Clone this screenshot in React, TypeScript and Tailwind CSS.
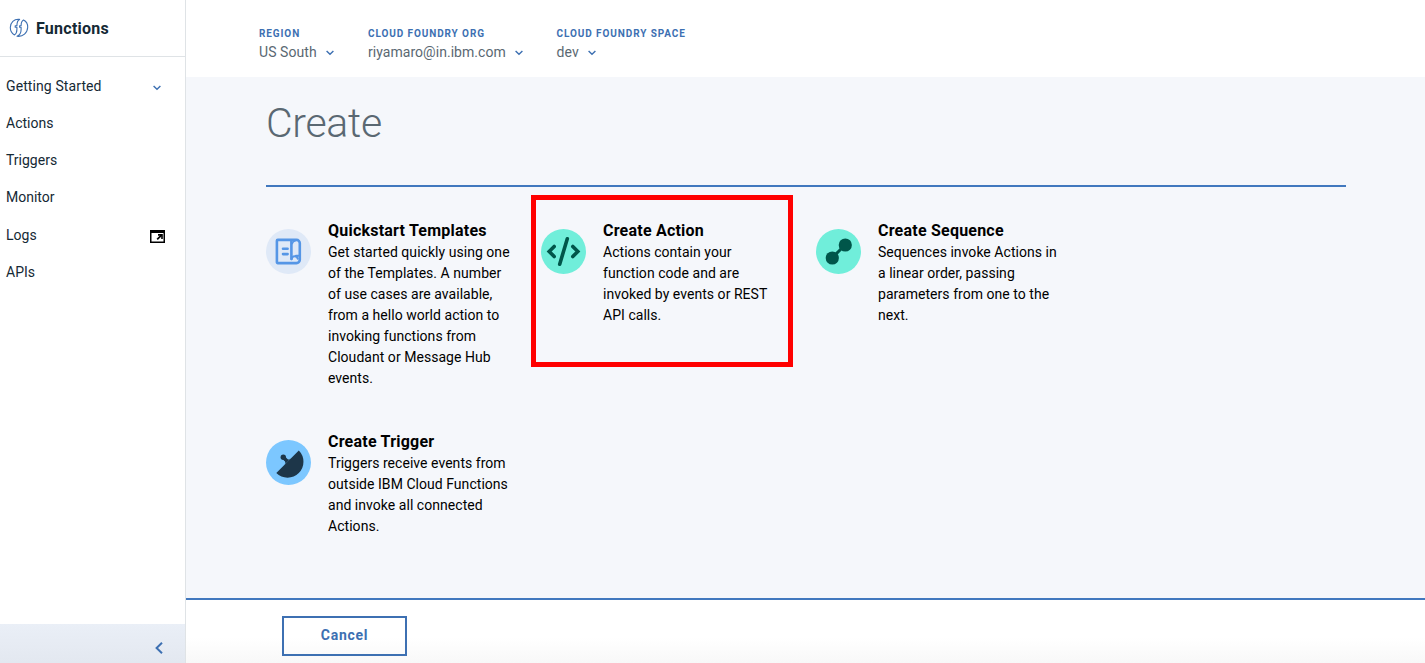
import React from "react";

function Chevron({ className = "" }: { className?: string }) {
  return (
    <svg viewBox="0 0 8 6" className={`h-[6px] w-[8px] shrink-0 ${className}`} fill="none" stroke="#3d70b2" strokeWidth="1.4">
      <path d="M0.6 0.9 4 4.3 7.4 0.9" />
    </svg>
  );
}

function FunctionsLogo() {
  return (
    <svg viewBox="0 0 20 20" className="h-5 w-5 shrink-0" fill="none" stroke="#3d70b2" strokeWidth="1.1" strokeLinejoin="round" strokeLinecap="round">
      <path d="M10.600 1.400C5 .6 1.300 4.900 1.300 9.500c0 3.200 1.500 5.900 4.200 7.400 1.900-1.200 2.400-3 2.400-5.400V9.300H6.200V7.800h1.700c0-3.400.6-5.600 2.700-6.400Z" />
      <path d="M14.500 2.100c2.800 1.400 4.300 4.200 4.200 7.200-.2 5.400-4.700 9.800-10.700 8.900 3.200-1.200 4.100-3.800 4.100-6.700V9.300h-1.500V7.800h1.500c0-3 .3-4.600 2.400-5.700Z" />
    </svg>
  );
}

function TemplateIcon() {
  return (
    <svg viewBox="0 0 45 45" className="h-[45px] w-[45px] shrink-0" fill="none" stroke="#5596e6" strokeWidth="2.6" strokeLinecap="round" strokeLinejoin="round">
      <circle cx="22.5" cy="22.5" r="22.5" fill="#dfe9f7" stroke="none" />
      <path d="M11.800 10.900h18.700a3.300 3.300 0 0 1 3.300 3.300v16.600a3.300 3.300 0 0 1-3.300 3.300H11.800a.9.9 0 0 1-.9-.9V11.800c0-.5.400-.9.900-.9Z" />
      <path d="M25.400 12v18M17 19.700h4.600M17 25.100h4.600" />
      <path d="M25.600 30.200c.3-2 1.400-3 3-3 1.700 0 2.900 1 3.200 2.600M30 26.700h3.500" strokeWidth="2" />
      <path d="M26.300 14.500c.5-1.500 1.500-2.400 3-2.700" strokeWidth="1.5" />
    </svg>
  );
}

function ActionIcon() {
  return (
    <svg viewBox="0 0 45 45" className="h-[45px] w-[45px] shrink-0" fill="none" stroke="#00564a" strokeWidth="3.6">
      <circle cx="22.5" cy="22.5" r="22.5" fill="#70eeda" stroke="none" />
      <path d="M13.200 17.500 8.200 22.500l5 5M31.800 17.500l5 5-5 5" strokeLinecap="round" />
      <path d="M26.300 9.800 18.700 35.200" strokeLinecap="round" />
    </svg>
  );
}

function SequenceIcon() {
  return (
    <svg viewBox="0 0 45 45" className="h-[45px] w-[45px] shrink-0" fill="#00564a">
      <circle cx="22.5" cy="22.5" r="22.5" fill="#70eeda" />
      <path d="M16 29 29 16" stroke="#00564a" strokeWidth="3" />
      <circle cx="16.3" cy="29" r="6.6" />
      <circle cx="29.3" cy="16" r="6.6" />
    </svg>
  );
}

function TriggerIcon() {
  return (
    <svg viewBox="0 0 45 45" className="h-[45px] w-[45px] shrink-0" fill="#1d3649">
      <circle cx="22.5" cy="22.5" r="22.5" fill="#7cc7ff" />
      <path d="M32.800 10.500A15.900 15.900 0 0 1 10.300 33Z" />
      <path d="M18.600 19.200c1.900 1 3.800.8 6-.8l-6 6.200c1.200-2 1-3.600-.9-4.600Z" />
      <path d="M17.300 17.300 21.500 21.500" stroke="#1d3649" strokeWidth="3.4" />
      <circle cx="17.3" cy="17.3" r="2.7" />
    </svg>
  );
}

function LaunchIcon() {
  return (
    <svg viewBox="0 0 15 13" className="mt-[2px] h-[13px] w-[15px] shrink-0" fill="none" stroke="#000">
      <path d="M.75 1.500v10.750h13.500V1.500" strokeWidth="1.5" />
      <path d="M0 1.500h15" strokeWidth="3" />
      <path d="M7.200 9.300 11.300 5.400" strokeWidth="1.8" />
      <path d="M8 4.900h4v4" strokeWidth="1.6" />
    </svg>
  );
}

const nav = ["Getting Started", "Actions", "Triggers", "Monitor", "Logs", "APIs"];

const filters = [
  { label: "REGION", value: "US South", box: "w-[109px]", track: "tracking-[0.06px]" },
  { label: "CLOUD FOUNDRY ORG", value: "riyamaro@in.ibm.com", box: "w-[188.6px]", track: "tracking-[0.04px]" },
  { label: "CLOUD FOUNDRY SPACE", value: "dev", box: "w-[160px]", track: "tracking-[0.1px]" },
];

const cards = [
  {
    title: "Quickstart Templates",
    icon: <TemplateIcon />,
    lines: [
      "Get started quickly using one",
      "of the Templates. A number",
      "of use cases are available,",
      "from a hello world action to",
      "invoking functions from",
      "Cloudant or Message Hub",
      "events.",
    ],
  },
  {
    title: "Create Action",
    icon: <ActionIcon />,
    lines: ["Actions contain your", "function code and are", "invoked by events or REST", "API calls."],
    highlighted: true,
  },
  {
    title: "Create Sequence",
    icon: <SequenceIcon />,
    lines: ["Sequences invoke Actions in", "a linear order, passing", "parameters from one to the", "next."],
  },
  {
    title: "Create Trigger",
    icon: <TriggerIcon />,
    lines: ["Triggers receive events from", "outside IBM Cloud Functions", "and invoke all connected", "Actions."],
  },
];

export default function App() {
  return (
    <div className="flex h-[663px] w-full overflow-hidden bg-white font-['Roboto','Liberation_Sans',sans-serif] text-[14px] text-black">
      <aside className="flex w-[186px] shrink-0 flex-col border-r border-[#dfe3e6]">
        <div className="flex h-[57px] items-center gap-[7px] border-b border-[#dfe3e6] pl-[9px] text-[#152935]">
          <FunctionsLogo />
          <h2 className="pt-px text-[16px] font-bold tracking-[0.25px]">Functions</h2>
        </div>
        <nav className="flex flex-1 flex-col pt-[11px] text-[#152935]">
          {nav.map((item) => (
            <a key={item} className="flex h-[37.13px] items-center justify-between pl-[6px] pr-[20px]">
              <span className={item === "Getting Started" ? "tracking-[0.1px]" : ""}>{item}</span>
              {item === "Getting Started" && <Chevron className="mr-[4px] mt-[2px]" />}
              {item === "Logs" && <LaunchIcon />}
            </a>
          ))}
        </nav>
        <div className="flex h-[39px] items-center justify-end bg-linear-to-b from-[#eaeff7] to-[#e3e8f0] pr-[22px] pt-[9px]">
          <svg viewBox="0 0 8 12" className="h-3 w-2" fill="none" stroke="#3d70b2" strokeWidth="2">
            <path d="M7 .8 1.600 6 7 11.200" />
          </svg>
        </div>
      </aside>
      <main className="flex min-w-0 flex-1 flex-col">
        <header className="flex h-[77px] shrink-0 pl-[73px] pt-[27px]">
          {filters.map((f) => (
            <div key={f.label} className={`${f.box} whitespace-nowrap`}>
              <div className="text-[10px] font-bold leading-[13px] tracking-[0.9px] text-[#3d70b2]">{f.label}</div>
              <div className="mt-[2px] flex items-center gap-[9px] leading-5 text-[#5a6872]">
                <span className={f.track}>{f.value}</span>
                <Chevron className="mt-[2px]" />
              </div>
            </div>
          ))}
        </header>
        <section className="flex-1 bg-[#f5f7fb] px-20">
          <h1 className="h-[108px] pt-[21px] text-[41px] font-light leading-[50px] tracking-[-0.3px] text-[#5a6872]">Create</h1>
          <div className="h-[2px] w-[1080px] bg-[#4178be]" />
          <div className="grid w-[825px] grid-cols-[repeat(3,275px)] grid-rows-[211px_auto] pt-[33px]">
            {cards.map((card) => (
              <article key={card.title} className="relative flex items-start gap-[17px]">
                <div className="mt-[9px]">{card.icon}</div>
                <div className="whitespace-nowrap leading-[21px]">
                  <h3 className="text-[16px] font-bold tracking-[0.22px]">{card.title}</h3>
                  <p className="mt-px tracking-[0.04px]">
                    {card.lines.map((line) => (
                      <span key={line} className="block">{line}</span>
                    ))}
                  </p>
                </div>
                {card.highlighted && (
                  <div className="absolute -left-[10px] -top-[25px] h-[172px] w-[262px] border-[5px] border-[#ff0000]" />
                )}
              </article>
            ))}
          </div>
        </section>
        <footer className="h-[65px] shrink-0 border-t-2 border-[#4178be] bg-linear-to-b from-white from-60% to-[#f8f8f8] pl-24 pt-4">
          <button className="flex h-10 w-[125px] items-center justify-center border-2 border-[#3d70b2] pb-[2px] text-[14px] font-bold tracking-[0.7px] text-[#3d70b2]">
            Cancel
          </button>
        </footer>
      </main>
    </div>
  );
}
